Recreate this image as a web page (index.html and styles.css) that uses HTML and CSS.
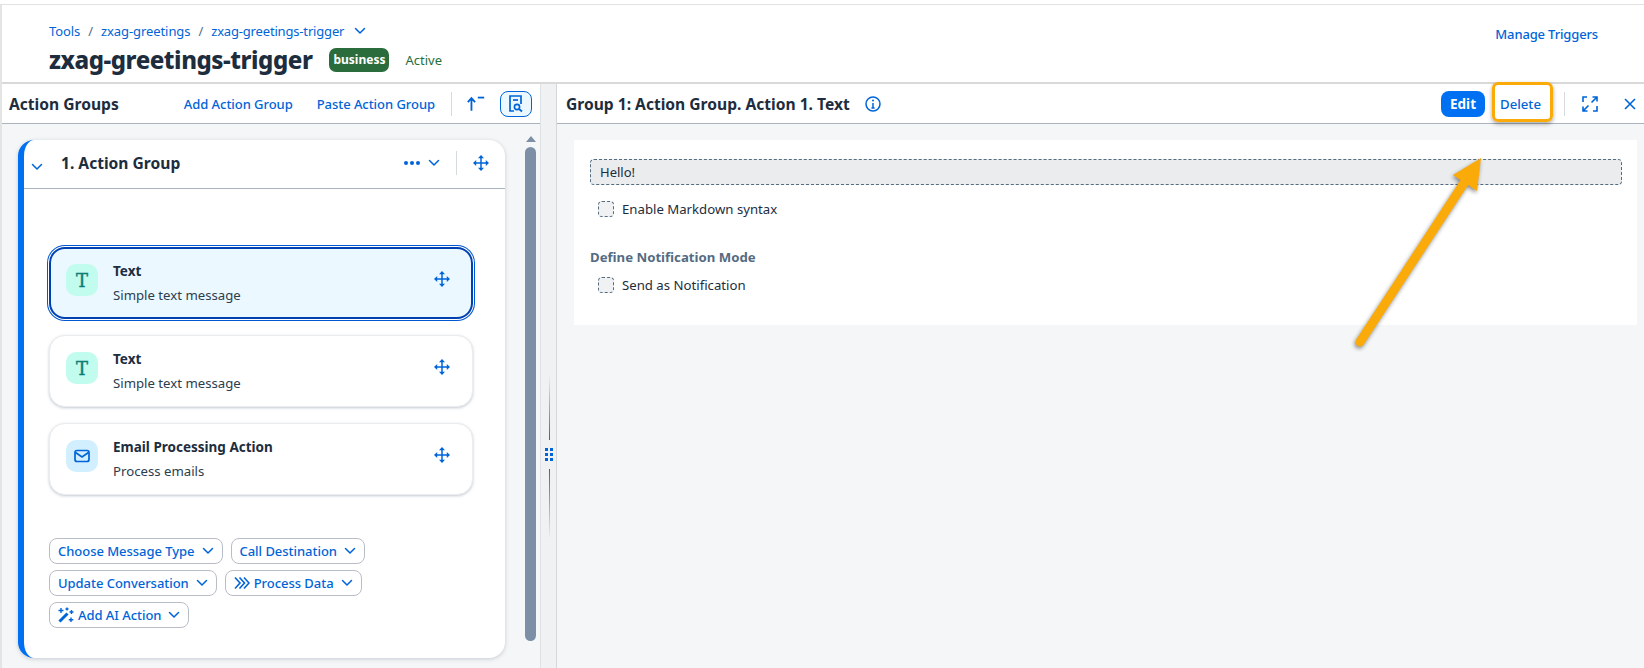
FILE: index.html
```html
<!DOCTYPE html>
<html lang="en">

<head>
    <meta charset="UTF-8">
    <title>zxag-greetings-trigger</title>
    <link rel="stylesheet" href="styles.css">
</head>

<body>
    <svg class="icon-defs" width="0" height="0">
        <symbol id="move" viewBox="0 0 16 16">
            <path d="M8 1v14M1 8h14" fill="none" stroke="currentColor" stroke-width="1.5" />
            <path d="M8 0l3 3.2H5zM8 16l-3-3.2h6zM0 8l3.2-3v6zM16 8l-3.2 3V5z" fill="currentColor" />
        </symbol>
        <symbol id="chev" viewBox="0 0 12 12">
            <path d="M1.5 3.5L6 8l4.5-4.5" fill="none" stroke="currentColor" stroke-width="1.5" stroke-linecap="round" stroke-linejoin="round" />
        </symbol>
    </svg>

    <div class="page">
        <header class="page-head">
            <div class="head-left">
                <div class="crumbs">
                    <a>Tools</a><span class="sep">/</span><a>zxag-greetings</a><span class="sep">/</span><a class="crumb-last">zxag-greetings-trigger</a>
                    <svg class="crumb-chev"><use href="#chev" /></svg>
                </div>
                <div class="title-row">
                    <h1>zxag-greetings-trigger</h1>
                    <span class="badge">business</span>
                    <span class="status">Active</span>
                </div>
            </div>
            <a class="manage">Manage Triggers</a>
        </header>

        <div class="main">
            <section class="left-panel">
                <div class="bar">
                    <h2>Action Groups</h2>
                    <div class="bar-actions">
                        <a class="add-group">Add Action Group</a>
                        <a class="paste-group">Paste Action Group</a>
                        <span class="divider"></span>
                        <svg class="sort-icon" viewBox="0 0 22 18">
                            <path d="M6 17V4M2 7.5L6 3l4 4.5" fill="none" stroke="currentColor" stroke-width="2" />
                            <path d="M13 2.5h7" stroke="currentColor" stroke-width="2" />
                        </svg>
                        <span class="toggle-btn">
                            <svg viewBox="0 0 16 18" width="16" height="18">
                                <path d="M6 16H2V1h11v8" fill="none" stroke="currentColor" stroke-width="1.7" />
                                <path d="M5 5h5" stroke="currentColor" stroke-width="1.7" />
                                <circle cx="9" cy="12" r="2.6" fill="none" stroke="currentColor" stroke-width="1.6" />
                                <path d="M11 14l3 2.5" stroke="currentColor" stroke-width="1.8" />
                            </svg>
                        </span>
                    </div>
                </div>

                <div class="left-body">
                    <div class="group-card">
                        <div class="group-head">
                            <svg class="group-chev"><use href="#chev" /></svg>
                            <span class="group-name">1. Action Group</span>
                            <span class="dots"><i></i><i></i><i></i></span>
                            <svg class="small-chev"><use href="#chev" /></svg>
                            <span class="divider head-divider"></span>
                            <svg class="move-icon"><use href="#move" /></svg>
                        </div>

                        <div class="group-body">
                            <div class="action-list">
                                <div class="action-item selected">
                                    <span class="action-icon text-icon">T</span>
                                    <div class="action-text">
                                        <b>Text</b>
                                        <span>Simple text message</span>
                                    </div>
                                    <svg class="move-icon"><use href="#move" /></svg>
                                </div>
                                <div class="action-item">
                                    <span class="action-icon text-icon">T</span>
                                    <div class="action-text">
                                        <b>Text</b>
                                        <span>Simple text message</span>
                                    </div>
                                    <svg class="move-icon"><use href="#move" /></svg>
                                </div>
                                <div class="action-item">
                                    <span class="action-icon mail-icon">
                                        <svg viewBox="0 0 16 14" width="16" height="14">
                                            <rect x="1" y="1.5" width="14" height="11" rx="2" fill="none" stroke="currentColor" stroke-width="1.7" />
                                            <path d="M1.5 3.5L8 8l6.5-4.5" fill="none" stroke="currentColor" stroke-width="1.7" />
                                        </svg>
                                    </span>
                                    <div class="action-text">
                                        <b>Email Processing Action</b>
                                        <span>Process emails</span>
                                    </div>
                                    <svg class="move-icon"><use href="#move" /></svg>
                                </div>
                            </div>

                            <div class="add-buttons">
                                <span class="add-btn">Choose Message Type <svg><use href="#chev" /></svg></span>
                                <span class="add-btn">Call Destination <svg><use href="#chev" /></svg></span>
                                <span class="add-btn">Update Conversation <svg><use href="#chev" /></svg></span>
                                <span class="add-btn">
                                    <svg class="btn-icon" viewBox="0 0 16 14">
                                        <path d="M1 1.5L6 7l-5 5.5M5.5 1.5L10.5 7l-5 5.5M10 1.5L15 7l-5 5.5" fill="none" stroke="currentColor" stroke-width="1.6" />
                                    </svg>
                                    Process Data <svg><use href="#chev" /></svg>
                                </span>
                                <span class="add-btn">
                                    <svg class="btn-icon" viewBox="0 0 16 16">
                                        <path d="M1.5 14.5L9.5 6.5" stroke="currentColor" stroke-width="3" />
                                        <path d="M3 1v5M.5 3.5h5M9 .5v3M7.5 2h3M13.5 3v4M11.5 5h4M13 10.5v4.5M10.8 12.8h4.5" stroke="currentColor" stroke-width="1.4" />
                                    </svg>
                                    Add AI Action <svg><use href="#chev" /></svg>
                                </span>
                            </div>
                        </div>
                    </div>

                    <div class="scrollbar">
                        <span class="scroll-up"></span>
                        <span class="scroll-thumb"></span>
                    </div>
                </div>
            </section>

            <div class="splitter">
                <span class="split-line"></span>
                <span class="grip"><i></i><i></i><i></i><i></i><i></i><i></i></span>
                <span class="split-line line-low"></span>
            </div>

            <section class="right-panel">
                <div class="bar right-bar">
                    <h2>Group 1: Action Group. Action 1. Text</h2>
                    <svg class="info-icon" viewBox="0 0 16 16">
                        <circle cx="8" cy="8" r="7" fill="none" stroke="currentColor" stroke-width="1.5" />
                        <path d="M8 7v5M6.4 12h3.2" stroke="currentColor" stroke-width="1.5" fill="none" />
                        <circle cx="8" cy="4.5" r="1" fill="currentColor" />
                    </svg>
                    <div class="right-actions">
                        <span class="edit-btn">Edit</span>
                        <span class="delete-btn">Delete</span>
                        <span class="divider"></span>
                        <svg class="expand-icon" viewBox="0 0 16 16">
                            <path d="M1 6V1h4M15 10v5h-4M9.5 6.5L14.5 1.5M10.5 1H15v4.5M6.5 9.5l-5 5M1 10.500V15h4.500" fill="none" stroke="currentColor" stroke-width="1.6" />
                        </svg>
                        <svg class="close-icon" viewBox="0 0 12 12">
                            <path d="M1 1l10 10M11 1L1 11" stroke="currentColor" stroke-width="1.6" />
                        </svg>
                    </div>
                </div>

                <div class="right-body">
                    <div class="form-box">
                        <div class="text-input">Hello!</div>
                        <label class="check-row"><span class="check"></span>Enable Markdown syntax</label>
                        <h3>Define Notification Mode</h3>
                        <label class="check-row"><span class="check"></span>Send as Notification</label>
                    </div>
                </div>
            </section>
        </div>
    </div>

    <!-- annotation drawn on top of the screenshot -->
    <span class="mark-box"></span>
    <svg class="mark-arrow" width="1644" height="668">
        <path d="M1360 342L1464 183" stroke="#faab0a" stroke-width="9" stroke-linecap="round" fill="none" />
        <path d="M1481 158L1477 191L1453 175Z" fill="#faab0a" />
    </svg>
</body>

</html>
```

FILE: styles.css
```css
* {
    box-sizing: border-box;
}

html,
body {
    margin: 0;
    height: 668px;
    overflow: hidden;
}

body {
    background: #fff;
    color: #1d2d3e;
    font-family: "Noto Sans", "Open Sans", sans-serif;
    font-size: 14px;
}

a {
    color: #0064d9;
}

.icon-defs {
    position: absolute;
}

.page {
    display: flex;
    flex-direction: column;
    height: 668px;
    margin-top: 4px;
    border-top: 1px solid #e2e2e2;
    border-left: 2px solid #e4e4e4;
}

.page-head {
    display: flex;
    justify-content: space-between;
    height: 79px;
    flex: none;
    padding: 0 46px 0 47px;
    border-bottom: 2px solid #d9d9d9;
}

.crumbs {
    display: flex;
    align-items: center;
    height: 20px;
    margin-top: 16px;
    font-size: 13px;
    letter-spacing: -0.08px;
}

.crumb-last {
    letter-spacing: -0.17px;
}

.sep {
    margin: 0 8px;
    color: #556b82;
}

.crumb-chev {
    width: 12px;
    height: 12px;
    margin-left: 10px;
    color: #0064d9;
}

.title-row {
    display: flex;
    align-items: center;
    margin-top: 1px;
}

h1 {
    margin: 0;
    font-size: 24px;
    line-height: 36px;
    font-weight: 800;
    letter-spacing: -0.45px;
}

.badge {
    height: 24px;
    margin-left: 17px;
    padding: 0 4px;
    border-radius: 7px;
    background: #2b6c3c;
    color: #fff;
    font-size: 12px;
    font-weight: 700;
    line-height: 24px;
}

.status {
    margin-left: 16px;
    color: #256f3a;
    font-size: 13px;
}

.manage {
    margin-top: 20px;
    font-size: 13px;
    font-weight: 500;
    letter-spacing: -0.15px;
}

.main {
    display: flex;
    flex: 1;
    min-height: 0;
}

.left-panel {
    display: flex;
    flex-direction: column;
    width: 538px;
    flex: none;
    background: #f5f6f7;
}

.bar {
    display: flex;
    align-items: center;
    height: 40px;
    flex: none;
    background: #fff;
    border-bottom: 1px solid #a9b4be;
}

h2 {
    margin: 0;
    font-size: 15.6px;
    font-weight: 700;
}

.left-panel .bar {
    padding-left: 7px;
}

.bar-actions {
    display: flex;
    align-items: center;
    margin-left: auto;
    padding-right: 8px;
    font-size: 13px;
    font-weight: 500;
    letter-spacing: -0.05px;
}

.paste-group {
    margin-left: 24px;
}

.divider {
    width: 1px;
    height: 24px;
    background: #d5dadd;
}

.bar-actions .divider {
    margin-left: 16px;
}

.sort-icon {
    width: 20px;
    height: 17px;
    margin-left: 14px;
    color: #0064d9;
}

.toggle-btn {
    display: flex;
    align-items: center;
    justify-content: center;
    width: 32px;
    height: 26px;
    margin-left: 14px;
    border: 1px solid #0064d9;
    border-radius: 8px;
    background: #ebf8ff;
    color: #0064d9;
}

.left-body {
    display: flex;
    flex: 1;
    min-height: 0;
}

.group-card {
    width: 487px;
    height: 518px;
    margin: 16px 0 0 16px;
    flex: none;
    border-left: 6px solid #0070f2;
    border-radius: 16px;
    background: #fff;
    box-shadow: 0 1px 4px rgba(85, 107, 130, 0.3);
}

.group-head {
    display: flex;
    align-items: center;
    height: 49px;
    padding: 0 16px 2px 0;
    border-bottom: 1px solid #a9b4be;
}

.group-chev {
    width: 12px;
    height: 12px;
    margin: 8px 0 0 7px;
    color: #0064d9;
}

.group-name {
    margin: 0 auto 0 18px;
    font-size: 15.6px;
    font-weight: 700;
}

.dots {
    display: flex;
    gap: 2px;
}

.dots i {
    width: 4px;
    height: 4px;
    border-radius: 50%;
    background: #0064d9;
}

.small-chev {
    width: 12px;
    height: 12px;
    margin-left: 8px;
    color: #0064d9;
}

.head-divider {
    margin: 0 16px;
}

.move-icon {
    width: 16px;
    height: 16px;
    color: #0064d9;
}

.group-body {
    padding: 58px 32px 0 25px;
}

.action-list {
    display: flex;
    flex-direction: column;
    gap: 16px;
}

.action-item {
    display: flex;
    align-items: flex-start;
    height: 72px;
    padding: 16px 22px 0 16px;
    border: 1px solid #eaecee;
    border-radius: 16px;
    background: #fff;
    box-shadow: 0 1px 3px rgba(85, 107, 130, 0.35);
}

.action-item.selected {
    border: 2px solid #0040b0;
    padding: 15px 21px 0 15px;
    background: #ebf8ff;
    box-shadow: 0 0 0 1px #fff, 0 0 0 2px #0057d2;
}

.action-item .move-icon {
    margin: 7px 0 0 auto;
}

.action-icon {
    display: flex;
    align-items: center;
    justify-content: center;
    width: 32px;
    height: 32px;
    flex: none;
    border-radius: 10px;
}

.text-icon {
    background: #c2fcee;
    color: #0f7d78;
    font-family: "DejaVu Serif", serif;
    font-size: 18px;
    -webkit-text-stroke: 0.4px #0f7d78;
}

.mail-icon {
    background: #d1efff;
    color: #0064d9;
}

.action-text {
    display: flex;
    flex-direction: column;
    margin: -3px 0 0 15px;
    font-size: 13.2px;
}

.action-text b {
    font-size: 13.5px;
    line-height: 20px;
}

.action-text span {
    margin-top: 4px;
    line-height: 20px;
    color: #2b3d4f;
}

.add-buttons {
    display: flex;
    flex-wrap: wrap;
    gap: 6px 8px;
    margin-top: 43px;
    width: 340px;
}

.add-btn {
    display: flex;
    align-items: center;
    gap: 4px;
    height: 26px;
    padding: 0 8px;
    border: 1px solid #b8bec8;
    border-radius: 8px;
    color: #0064d9;
    font-size: 13px;
    font-weight: 500;
    letter-spacing: -0.04px;
}

.add-btn svg {
    width: 12px;
    height: 12px;
    margin-left: 3px;
}

.add-btn .btn-icon {
    width: 16px;
    height: 16px;
    margin: 0;
}

.scrollbar {
    display: flex;
    flex-direction: column;
    align-items: center;
    width: 11px;
    margin: 12px 0 0 20px;
}

.scroll-up {
    width: 0;
    height: 0;
    border: 5px solid transparent;
    border-top: 0;
    border-bottom: 6px solid #7d8fa6;
}

.scroll-thumb {
    width: 11px;
    height: 494px;
    margin-top: 5px;
    border-radius: 6px;
    background: #7d8fa6;
}

.splitter {
    display: flex;
    flex-direction: column;
    align-items: center;
    width: 17px;
    flex: none;
    padding: 291px 0 0 1px;
    background: #eff1f2;
    border-left: 1px solid #dfe2e5;
    border-right: 1px solid #d5d8db;
}

.split-line {
    width: 1px;
    height: 65px;
    background: linear-gradient(to bottom, #eff1f2, #0070f2);
}

.line-low {
    height: 70px;
    background: linear-gradient(to top, #eff1f2, #0070f2);
}

.grip {
    display: grid;
    grid-template-columns: 3px 3px;
    gap: 2px;
    margin: 8px 0;
}

.grip i {
    width: 3px;
    height: 3px;
    background: #0064d9;
}

.right-panel {
    display: flex;
    flex-direction: column;
    flex: 1;
    min-width: 0;
    background: #f5f6f7;
}

.right-bar {
    padding: 0 8px 0 9px;
}

.info-icon {
    width: 16px;
    height: 16px;
    margin-left: 15px;
    color: #0064d9;
}

.right-actions {
    display: flex;
    align-items: center;
    margin-left: auto;
}

.edit-btn {
    height: 26px;
    padding: 0 9px;
    border-radius: 8px;
    background: #0070f2;
    color: #fff;
    font-size: 13.5px;
    font-weight: 700;
    line-height: 26px;
}

.delete-btn {
    margin-left: 15px;
    color: #0064d9;
    font-size: 13.2px;
    font-weight: 500;
}

.right-actions .divider {
    margin-left: 23px;
}

.expand-icon {
    width: 16px;
    height: 16px;
    margin-left: 17px;
    color: #0064d9;
}

.close-icon {
    width: 12px;
    height: 12px;
    margin-left: 26px;
    color: #0064d9;
}

.right-body {
    padding: 16px 7px 0 17px;
}

.form-box {
    height: 185px;
    padding: 19px 15px 0 16px;
    background: #fff;
}

.text-input {
    height: 26px;
    padding-left: 9px;
    border: 1px dashed #556b82;
    border-radius: 4px;
    background: #eaecee;
    font-size: 13px;
    line-height: 24px;
}

.check-row {
    display: flex;
    align-items: center;
    gap: 8px;
    height: 20px;
    margin: 14px 0 0 8px;
    font-size: 13.2px;
}

.check {
    width: 16px;
    height: 16px;
    border: 1px dashed #556b82;
    border-radius: 4px;
    background: #eff1f2;
}

h3 {
    margin: 28px 0 0;
    color: #556b82;
    font-size: 13.2px;
    line-height: 20px;
    font-weight: 700;
}

h3 + .check-row {
    margin-top: 8px;
}

/* orange annotation */
.mark-box {
    position: absolute;
    left: 1492px;
    top: 82px;
    width: 61px;
    height: 40px;
    border: 3px solid #faab0a;
    border-radius: 6px;
    box-shadow: 0 2px 4px rgba(0, 0, 0, 0.35);
}

.mark-arrow {
    position: absolute;
    left: 0;
    top: 0;
    filter: drop-shadow(-1px 2px 2px rgba(0, 0, 0, 0.45));
}
```
